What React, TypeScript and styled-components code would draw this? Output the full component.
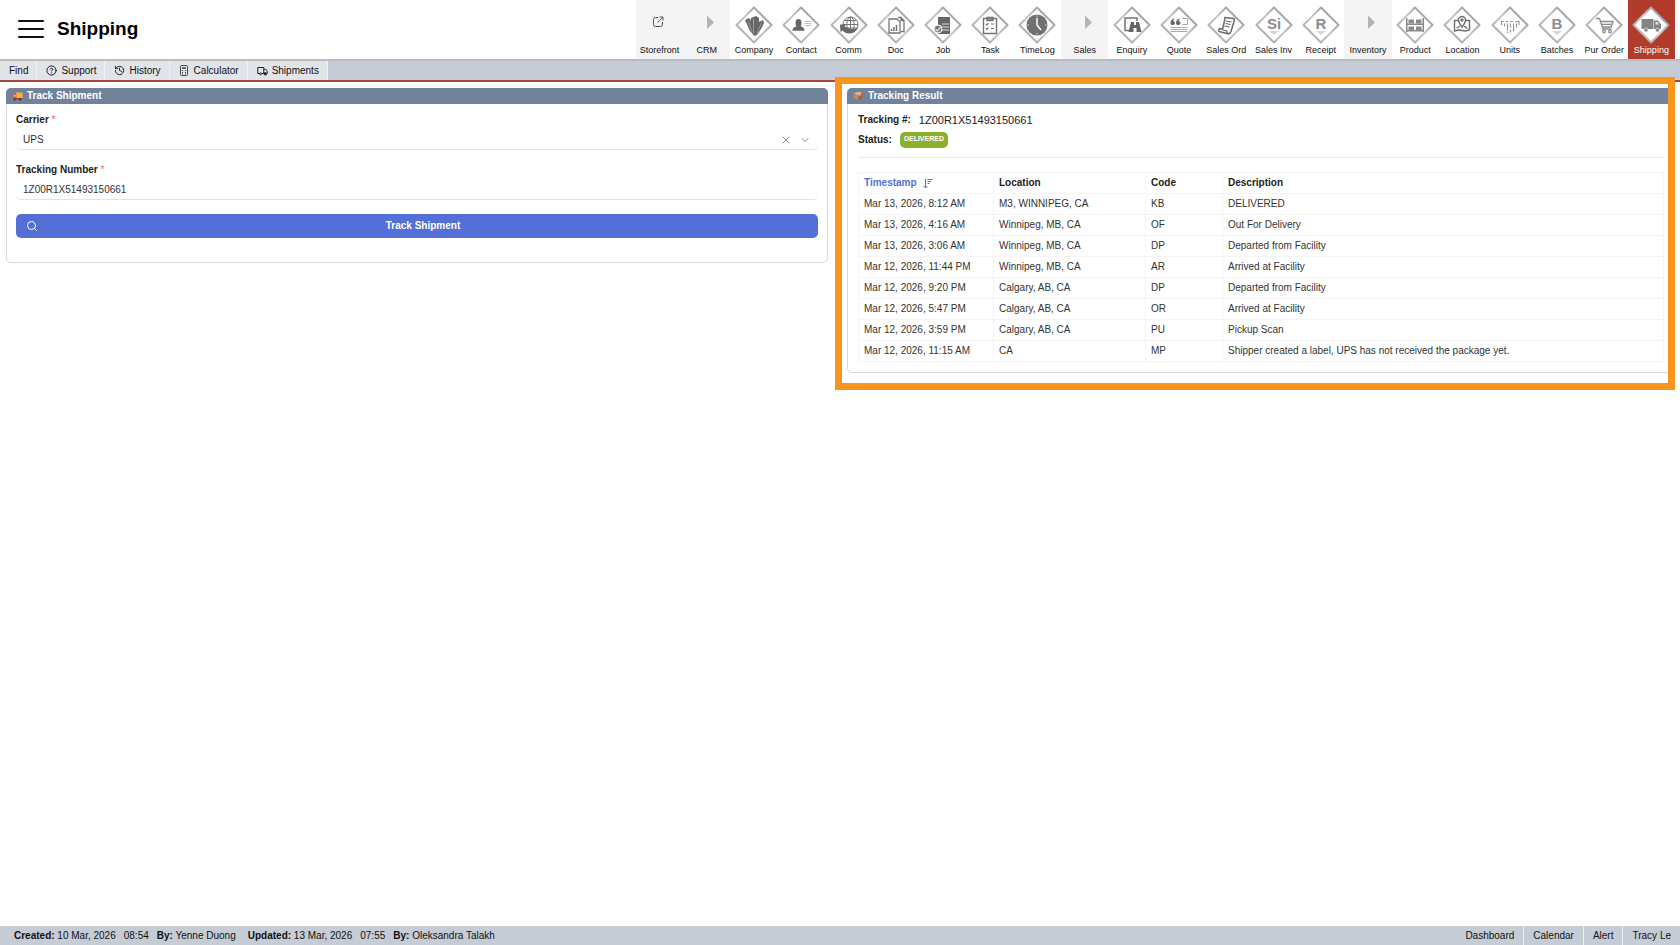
import React from "react";
import styled, { createGlobalStyle, css } from "styled-components";
import { ChevronDown, CircleQuestionMark, History, Search, X } from "lucide-react";

const GlobalStyle = createGlobalStyle`
  *, *::before, *::after { box-sizing: border-box; }
  body {
    margin: 0;
    background: #fff;
    color: #222;
    font-family: "Liberation Sans", Arial, sans-serif;
    font-size: 10px;
    line-height: 12px;
  }
  button, input, select { font: inherit; color: inherit; }
  svg { display: block; flex: none; }
`;

const Page = styled.div`
  min-height: 100vh;
  display: flex;
  flex-direction: column;
  overflow-x: hidden;
`;

const Header = styled.header`
  display: flex;
  align-items: stretch;
  justify-content: space-between;
  height: 61px;
  padding-right: 5px;
  border-bottom: 2px solid #b9bcc0;
`;

const Brand = styled.div`
  display: flex;
  align-items: center;
  gap: 13px;
  padding: 0 0 2px 18px;
`;

const MenuButton = styled.button`
  display: flex;
  flex-direction: column;
  justify-content: space-between;
  width: 26px;
  height: 18px;
  padding: 0;
  border: 0;
  background: none;
`;

const MenuBar = styled.span`
  height: 2px;
  border-radius: 1px;
  background: #111;
`;

const Title = styled.h1`
  margin: 0;
  color: #000;
  font-size: 19px;
  line-height: 22px;
`;

const ModuleNav = styled.nav`
  display: grid;
  grid-template-columns: repeat(22, 1fr);
  width: 1039px;
`;

const ModuleLink = styled.a<{ $kind?: "group" | "active" }>`
  display: flex;
  flex-direction: column;
  align-items: center;
  padding-top: 6px;
  color: #111;
  font-size: 9px;
  line-height: 12px;
  white-space: nowrap;
  text-decoration: none;
  ${(p) => p.$kind === "group" && css`background: #f4f4f4;`}
  ${(p) => p.$kind === "active" && css`background: #b23c2c; color: #fff;`}
`;

const Toolbar = styled.nav`
  display: flex;
  height: 21px;
  background: #c6ccd6;
  border-bottom: 2px solid #a5463c;
`;

const ToolLink = styled.a`
  display: flex;
  align-items: center;
  gap: 4px;
  padding: 0 8px 0 9px;
  border-right: 1px solid #eef0f3;
  background: #e1e4e9;
  color: #111;
  text-decoration: none;
`;

const Main = styled.main`
  flex: 1;
  display: grid;
  grid-template-columns: minmax(0, 822fr) minmax(0, 828fr);
  align-items: start;
  gap: 19px;
  padding: 6px 5px 16px 6px;
`;

const Panel = styled.section`
  border: 1px solid #d3d9e1;
  border-radius: 5px;
`;

const PanelTitle = styled.h2`
  display: flex;
  align-items: center;
  gap: 4px;
  height: 16px;
  margin: -1px -1px 0;
  padding: 0 6px;
  border-radius: 5px 5px 0 0;
  background: #71829b;
  color: #fff;
  font-size: 10px;
  line-height: 14px;
`;

const Form = styled.form`
  display: flex;
  flex-direction: column;
  padding: 10px 9px 24px;
`;

const FieldLabel = styled.label`
  color: #222;
  font-weight: bold;
`;

const Required = styled.span`
  color: #ff6347;
  font-weight: normal;
`;

const Field = styled.div`
  display: flex;
  align-items: center;
  gap: 7px;
  height: 24px;
  margin-bottom: 14px;
  padding: 4px 7px 0;
  border-bottom: 1px solid #e2e2e2;
  border-radius: 0 0 5px 5px;
  color: #8a8a8a;
`;

const SelectInput = styled.select`
  flex: 1;
  appearance: none;
  padding: 0;
  border: 0;
  background: none;
  color: #333;
`;

const TextInput = styled.input`
  flex: 1;
  padding: 0;
  border: 0;
  background: none;
  color: #333;
`;

const IconButton = styled.button`
  padding: 0;
  border: 0;
  background: none;
`;

const SubmitButton = styled.button`
  display: flex;
  align-items: center;
  height: 24px;
  padding: 0 10px;
  border: 0;
  border-radius: 5px;
  background: #5470d6;
  color: #fff;
  font-weight: bold;
`;

const SubmitText = styled.span`
  flex: 1;
  text-align: center;
`;

const ResultArea = styled.div`
  position: relative;
`;

const Highlight = styled.div`
  position: absolute;
  inset: -11px 0 -17px -12px;
  border: 7px solid #f8951d;
  pointer-events: none;
`;

const ResultBody = styled.div`
  padding: 7px 10px 10px;
`;

const Summary = styled.dl`
  display: grid;
  gap: 2px;
  margin: 0 0 14px;
  padding-bottom: 8px;
  border-bottom: 1px solid #e9e9e9;
`;

const SummaryRow = styled.div`
  display: flex;
  align-items: center;
  gap: 8px;
  height: 18px;
`;

const Term = styled.dt`
  font-weight: bold;
`;

const Detail = styled.dd`
  margin: 0;
  font-size: 11px;
`;

const Badge = styled.span`
  display: block;
  height: 16px;
  padding: 0 4px;
  border-radius: 5px;
  background: #8ab02c;
  color: #fff;
  font-size: 7px;
  font-weight: bold;
  line-height: 13px;
`;

const Table = styled.table`
  width: 100%;
  border-collapse: collapse;
  table-layout: fixed;
`;

const cell = css`
  height: 21px;
  padding: 0 5px;
  border: 1px solid #f5f5f5;
  text-align: left;
  white-space: nowrap;
`;

const HeadCell = styled.th<{ $width?: number }>`
  ${cell}
  ${(p) => p.$width && css`width: ${p.$width}px;`}
`;

const SortButton = styled.button`
  display: flex;
  align-items: center;
  gap: 5px;
  padding: 0;
  border: 0;
  background: none;
  color: #5470d6;
`;

const Cell = styled.td`
  ${cell}
  color: #333;
`;

const Footer = styled.footer`
  display: flex;
  justify-content: space-between;
  height: 19px;
  background: #c6ccd6;
  color: #111;
`;

const AuditInfo = styled.div`
  display: flex;
  align-items: center;
  gap: 12px;
  padding: 1px 0 0 14px;
`;

const AuditGroup = styled.span`
  display: flex;
  gap: 8px;
`;

const FooterLinks = styled.nav`
  display: flex;
`;

const FooterLink = styled.a`
  display: flex;
  align-items: center;
  padding: 0 9px;
  color: inherit;
  text-decoration: none;
  & + & { border-left: 1px solid #eef0f3; }
`;

const G = "#747474";

function Diamond({ children }: { children: React.ReactNode }) {
  return (
    <svg width="38" height="38" viewBox="0 0 38 38" fill="none" aria-hidden="true">
      <defs>
        <linearGradient id="edge" x1="1" y1="0" x2="0" y2="1">
          <stop offset="0" stopColor="#858585" />
          <stop offset="0.5" stopColor="#c9c9c9" />
          <stop offset="1" stopColor="#9c9c9c" />
        </linearGradient>
      </defs>
      <path d="M19 1.500 36.500 19 19 36.500 1.500 19Z" fill="#fff" stroke="url(#edge)" strokeWidth="2" strokeLinejoin="round" />
      {children}
    </svg>
  );
}

function Letter({ children }: { children: string }) {
  return (
    <>
      <text x="19" y="23" textAnchor="middle" fontSize="15" fontWeight="bold" fill="#8c8c8c">{children}</text>
      <path d="M14 25h10l-5 4z" fill="#d6d6d6" />
    </>
  );
}

const art: Record<string, React.ReactNode> = {
  Company: (
    <g>
      <path d="M16 12l5-2 3 2v12l-3 6-3-1-2-4zM10 14l4-2 3 4 1 12-3-3zM24 16l4-2 1 3-3 6-4 6z" fill="#666" />
      <path d="M18.500 12.500V28M13 14.500l4 11M26.500 16.500L22 27" stroke="#aaa" strokeWidth="0.800" />
    </g>
  ),
  Contact: (
    <g fill="#666">
      <ellipse cx="16.500" cy="17" rx="3" ry="4" />
      <path d="M15 20h3.500l3 1.800q1 1 1 3h-12q0-2 1-3z" />
      <path d="M22.500 15.500h7M22.500 17.500h7M22.500 19.500h7" stroke="#c4c4c4" />
    </g>
  ),
  Comm: (
    <g stroke={G}>
      <circle cx="20.500" cy="18.500" r="7.500" />
      <ellipse cx="20.500" cy="18.500" rx="3.700" ry="7.500" />
      <path d="M13 18.500h15M14 14.500h13M14 22h13M20.500 11v15" />
      <path d="M10 18.500h6l-1.500 2q6 4 13.500 1.500-3 5.500-9 5.500-4 0-6.500-3L10.500 26z" fill="#666" stroke="none" />
    </g>
  ),
  Doc: (
    <g stroke={G} strokeWidth="1.300">
      <path d="M12 13h8l3 3v11H12zM21 11.500h3l3 3v11h-3M24 11.500v3h3" />
      <path d="M14.500 25v-2M17 25v-4M19.500 25v-6" strokeWidth="1.500" />
    </g>
  ),
  Job: (
    <g>
      <path d="M14 11h12v17H14z" fill="#666" />
      <path d="M18 18h7M18 21h7M18 24h7" stroke="#ddd" />
      <circle cx="14" cy="23" r="4" fill="#777" stroke="#fff" />
      <path d="M11.500 23l2 2 4-5" stroke="#ddd" strokeWidth="1.300" />
    </g>
  ),
  Task: (
    <g stroke={G} strokeWidth="1.400">
      <path d="M12.500 12.500h13v15h-13z" />
      <path d="M16 11.500h6v3h-6z" fill="#888" />
      <path d="M15 18l1 1 1.500-2M20 18h3M15 22.500l1 1 1.500-2M20 22.500h3" strokeWidth="1.200" />
    </g>
  ),
  TimeLog: (
    <g>
      <circle cx="19" cy="19" r="10.500" fill="#707070" />
      <path d="M19 12v7l4 5" stroke="#fff" strokeWidth="1.500" />
      <path d="M19 9.500v1.500M19 27v1.500M9.500 19H11M27 19h1.500" stroke="#ddd" />
    </g>
  ),
  Enquiry: (
    <g>
      <path d="M16 24.500h-4V12h12v3" stroke={G} strokeWidth="1.500" />
      <path d="M18 16h3v3h2v-3h3l2.500 10h-5v-4h-3v4h-5z" fill="#666" />
    </g>
  ),
  Quote: (
    <g>
      <path d="M10.500 17.500q0-4.500 4-5l-1.500 2.500q2 0 2 2t-2.200 2-2.300-1.500zM16 17.500q0-4.500 4-5l-1.500 2.500q2 0 2 2t-2.200 2-2.300-1.500z" fill="#666" />
      <path d="M22 12.500h5.500v6H22M10.500 21.500h17M10.500 23.500h17M10.500 25.500h17" stroke="#aaa" />
    </g>
  ),
  "Sales Ord": (
    <g stroke="#6b6b6b" strokeWidth="1.500" strokeLinejoin="round">
      <path d="M17 11.500l10 1q1 1 0 3l-3 10q-1 3-4 2l-8-2q-1-2 1-3l2.500 1 2.500-11" />
      <path d="M19 15l5.500 1M18.500 17.500l5 1M17.500 20l5 1M16 24l4 1q0 2 1 2.500" strokeWidth="1.200" />
    </g>
  ),
  "Sales Inv": <Letter>Si</Letter>,
  Receipt: <Letter>R</Letter>,
  Product: (
    <g fill="#8a8a8a">
      <path d="M10 12h1.500v14H10zM26.500 12H28v14h-1.500zM11 17.500h16V19H11zM11 24h16v1.500H11z" />
      <path d="M12.500 13.500H18v4h-5.500zM20 13.500h5.500v4H20zM12.500 20.500H18V24h-5.500zM20 20.500h5.500V24H20z" />
    </g>
  ),
  Location: (
    <g stroke="#707070" strokeWidth="1.400">
      <path d="M15 14.500h-3.500V25l4-1 7 1 4-1v-9.500H23M13.500 22l3.500-2M21 20l3.500 2.500" />
      <path d="M19 21q-3.500-4.500-3.500-7a3.500 3.500 0 0 1 7 0q0 2.500-3.500 7z" />
      <circle cx="19" cy="14" r="1" />
    </g>
  ),
  Units: (
    <g stroke="#999" strokeWidth="1.200">
      <path d="M10.500 19v-3.500H13M14.500 15.500h3M19 15.500h3M24 15.500h4V19" />
      <path d="M13.500 17.500v3M16.500 17.500v7M19.500 17.500v4M22.500 17.500v8M25.500 17.500v4M16.500 25.500v1.500M19.500 23.500v3" />
    </g>
  ),
  Batches: <Letter>B</Letter>,
  "Pur Order": (
    <g stroke="#8c8c8c" strokeWidth="1.300">
      <path d="M11 12.500h3.500l3.500 10.500h8.500M15.500 15.500H28L26 21h-8.500M16.500 18.300H27" />
      <circle cx="19" cy="25.500" r="1.300" />
      <circle cx="25" cy="25.500" r="1.300" />
    </g>
  ),
  Shipping: (
    <g fill="#858585">
      <path d="M9.500 13h12v10h-12zM22 14.500h4l3 4V23h-7z" />
      <path d="M23.500 16h2l1.800 2.500h-3.800z" fill="#ddd" />
      <circle cx="14" cy="24" r="2" stroke="#fff" strokeWidth="0.500" />
      <circle cx="25.500" cy="24" r="2" stroke="#fff" strokeWidth="0.500" />
    </g>
  ),
};

function StorefrontIcon() {
  return (
    <svg width="38" height="38" viewBox="0 0 38 38" fill="none" stroke="#555" aria-hidden="true">
      <path d="M17 11.500h-2.500q-2 0-2 2v5q0 2 2 2h5q2 0 2-2V16" />
      <path d="M16.500 16.500l5-5M18.500 11h3.500v3.500" />
    </svg>
  );
}

function GroupArrow() {
  return (
    <svg width="38" height="38" viewBox="0 0 38 38" aria-hidden="true">
      <path d="M19 9.500l7 7-7 6.500z" fill="#b3b3b3" />
    </svg>
  );
}

function CalculatorIcon() {
  return (
    <svg width="11" height="11" viewBox="0 0 11 11" fill="none" stroke="#444" aria-hidden="true">
      <rect x="1.500" y="0.500" width="7" height="10" rx="1" />
      <path d="M3 3h4" strokeWidth="1.500" />
      <path d="M3 5.500h1M6 5.500h1M3 7.500h1M6 7.500h1M3 9h1M6 9h1" />
    </svg>
  );
}

function DeliveryIcon() {
  return (
    <svg width="11" height="10" viewBox="0 0 22 20" fill="none" stroke="#222" strokeWidth="2" aria-hidden="true">
      <path d="M5 15H1.500V3h12v12H9M13.500 6.500h4l3 4V15h-1" />
      <circle cx="7" cy="15.500" r="2" />
      <circle cx="16.500" cy="15.500" r="2.500" fill="#222" />
    </svg>
  );
}

function SortIcon() {
  return (
    <svg width="11" height="11" viewBox="0 0 11 11" fill="none" stroke="currentColor" aria-hidden="true">
      <path d="M3.500 1v9M1.500 8l2 2 2-2M5.500 1.500h5M5.500 3.500H9M5.500 5.500h2" />
    </svg>
  );
}

function TruckMark() {
  return (
    <svg width="11" height="10" viewBox="0 0 22 20" aria-hidden="true">
      <path d="M8 3h13v11H8z" fill="#f5b23b" />
      <path d="M3 6h6v11H1v-6z" fill="#e0523c" />
      <path d="M4 8h3v3H3z" fill="#bfe3f5" />
      <path d="M8 14h13v3H8z" fill="#b9352b" />
      <circle cx="5" cy="17" r="2.500" fill="#39424e" />
      <circle cx="16" cy="17" r="2.500" fill="#39424e" />
    </svg>
  );
}

function BoxMark() {
  return (
    <svg width="11" height="10" viewBox="0 0 22 20" aria-hidden="true">
      <path d="M1 5l11-4 8 3-8 5z" fill="#dba878" />
      <path d="M1 5l10 4v10L2 14z" fill="#c98a58" />
      <path d="M11 9l9-5-1 10-8 5z" fill="#a0623a" />
      <path d="M6 3l9 4v3l-2 1V8L4 4z" fill="#e8c9a2" />
    </svg>
  );
}

const modules = [
  "Storefront", "CRM", "Company", "Contact", "Comm", "Doc", "Job", "Task", "TimeLog", "Sales", "Enquiry",
  "Quote", "Sales Ord", "Sales Inv", "Receipt", "Inventory", "Product", "Location", "Units", "Batches",
  "Pur Order", "Shipping",
];
const groups = ["CRM", "Sales", "Inventory"];

function ModuleIcon({ name }: { name: string }) {
  if (name === "Storefront") return <StorefrontIcon />;
  if (groups.includes(name)) return <GroupArrow />;
  return <Diamond>{art[name]}</Diamond>;
}

function moduleKind(name: string) {
  if (name === "Shipping") return "active" as const;
  if (name === "Storefront" || groups.includes(name)) return "group" as const;
  return undefined;
}

const events = [
  ["Mar 13, 2026, 8:12 AM", "M3, WINNIPEG, CA", "KB", "DELIVERED"],
  ["Mar 13, 2026, 4:16 AM", "Winnipeg, MB, CA", "OF", "Out For Delivery"],
  ["Mar 13, 2026, 3:06 AM", "Winnipeg, MB, CA", "DP", "Departed from Facility"],
  ["Mar 12, 2026, 11:44 PM", "Winnipeg, MB, CA", "AR", "Arrived at Facility"],
  ["Mar 12, 2026, 9:20 PM", "Calgary, AB, CA", "DP", "Departed from Facility"],
  ["Mar 12, 2026, 5:47 PM", "Calgary, AB, CA", "OR", "Arrived at Facility"],
  ["Mar 12, 2026, 3:59 PM", "Calgary, AB, CA", "PU", "Pickup Scan"],
  ["Mar 12, 2026, 11:15 AM", "CA", "MP", "Shipper created a label, UPS has not received the package yet."],
];

export default function App() {
  return (
    <Page>
      <GlobalStyle />
      <Header>
        <Brand>
          <MenuButton type="button" aria-label="Menu">
            <MenuBar /><MenuBar /><MenuBar />
          </MenuButton>
          <Title>Shipping</Title>
        </Brand>
        <ModuleNav>
          {modules.map((name) => (
            <ModuleLink key={name} href="#" $kind={moduleKind(name)}>
              <ModuleIcon name={name} />
              {name}
            </ModuleLink>
          ))}
        </ModuleNav>
      </Header>

      <Toolbar>
        <ToolLink href="#">Find</ToolLink>
        <ToolLink href="#"><CircleQuestionMark size={11} />Support</ToolLink>
        <ToolLink href="#"><History size={11} />History</ToolLink>
        <ToolLink href="#"><CalculatorIcon />Calculator</ToolLink>
        <ToolLink href="#"><DeliveryIcon />Shipments</ToolLink>
      </Toolbar>

      <Main>
        <Panel>
          <PanelTitle><TruckMark />Track Shipment</PanelTitle>
          <Form onSubmit={(e) => e.preventDefault()}>
            <FieldLabel htmlFor="carrier">Carrier <Required>*</Required></FieldLabel>
            <Field>
              <SelectInput id="carrier" defaultValue="UPS"><option>UPS</option></SelectInput>
              <IconButton type="button" aria-label="Clear carrier"><X size={12} /></IconButton>
              <ChevronDown size={12} />
            </Field>
            <FieldLabel htmlFor="number">Tracking Number <Required>*</Required></FieldLabel>
            <Field>
              <TextInput id="number" defaultValue="1Z00R1X51493150661" />
            </Field>
            <SubmitButton type="submit"><Search size={12} /><SubmitText>Track Shipment</SubmitText></SubmitButton>
          </Form>
        </Panel>

        <ResultArea>
          <Panel>
            <PanelTitle><BoxMark />Tracking Result</PanelTitle>
            <ResultBody>
              <Summary>
                <SummaryRow><Term>Tracking #:</Term><Detail>1Z00R1X51493150661</Detail></SummaryRow>
                <SummaryRow><Term>Status:</Term><Detail><Badge>DELIVERED</Badge></Detail></SummaryRow>
              </Summary>
              <Table>
                <thead>
                  <tr>
                    <HeadCell $width={135}>
                      <SortButton type="button">Timestamp<SortIcon /></SortButton>
                    </HeadCell>
                    <HeadCell $width={152}>Location</HeadCell>
                    <HeadCell $width={77}>Code</HeadCell>
                    <HeadCell>Description</HeadCell>
                  </tr>
                </thead>
                <tbody>
                  {events.map((row) => (
                    <tr key={row[0]}>
                      {row.map((value, i) => <Cell key={i}>{value}</Cell>)}
                    </tr>
                  ))}
                </tbody>
              </Table>
            </ResultBody>
          </Panel>
          <Highlight />
        </ResultArea>
      </Main>

      <Footer>
        <AuditInfo>
          <AuditGroup><span><b>Created:</b> 10 Mar, 2026</span><span>08:54</span><span><b>By:</b> Yenne Duong</span></AuditGroup>
          <AuditGroup><span><b>Updated:</b> 13 Mar, 2026</span><span>07:55</span><span><b>By:</b> Oleksandra Talakh</span></AuditGroup>
        </AuditInfo>
        <FooterLinks>
          <FooterLink href="#">Dashboard</FooterLink>
          <FooterLink href="#">Calendar</FooterLink>
          <FooterLink href="#">Alert</FooterLink>
          <FooterLink href="#">Tracy Le</FooterLink>
        </FooterLinks>
      </Footer>
    </Page>
  );
}
